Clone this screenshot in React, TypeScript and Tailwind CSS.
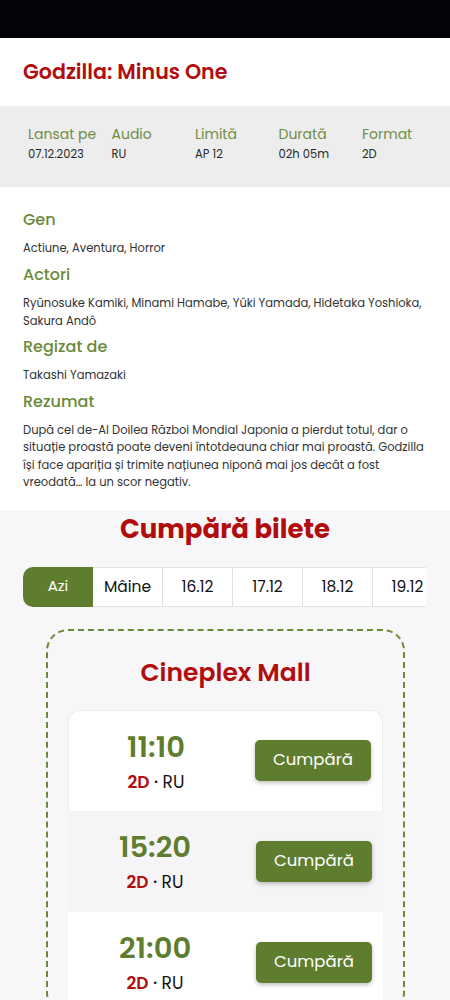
import React from "react";

const info = [
  { l: "Lansat pe", v: "07.12.2023" },
  { l: "Audio", v: "RU" },
  { l: "Limită", v: "AP 12" },
  { l: "Durată", v: "02h 05m" },
  { l: "Format", v: "2D" },
];

const tabs = ["Mâine", "16.12", "17.12", "18.12", "19.12"];

const shows = [
  { t: "11:10", bg: "bg-white", extra: "rounded-t-[12px] border-t border-x border-[#ececee]" },
  { t: "15:20", bg: "bg-[#f5f5f7]", extra: "" },
  { t: "21:00", bg: "bg-white", extra: "" },
];

export default function App() {
  return (
    <div className="w-[450px] min-h-[1000px] bg-[#f7f6f8] font-['Poppins','Inter',sans-serif] overflow-hidden">
      <div className="h-[38px] bg-[#050307]" />
      <div className="bg-white h-[68px] flex items-center px-[23px]">
        <h1 className="text-[#b20d0d] text-[20.6px] font-semibold">Godzilla: Minus One</h1>
      </div>
      <div className="bg-[#ededee] h-[81px] flex pl-[28px] pt-[18px]">
        {info.map((i) => (
          <div key={i.l} className="w-[83.5px] flex flex-col">
            <span className="text-[#6f8d45] text-[14px] leading-[20px] whitespace-nowrap">{i.l}</span>
            <span className="text-[#2a2a2a] text-[11.5px] leading-[16px] mt-[2px]">{i.v}</span>
          </div>
        ))}
      </div>
      <div className="bg-white px-[23px] pt-[21px] pb-[18px] text-[#333] text-[11.5px]">
        <h2 className="text-[#6a8a3a] text-[16px] font-medium leading-[24px]">Gen</h2>
        <p className="leading-[18px] mt-[7px]">Actiune, Aventura, Horror</p>
        <h2 className="text-[#6a8a3a] text-[16px] font-medium leading-[24px] mt-[6px]">Actori</h2>
        <p className="leading-[18px] mt-[7px]">Ryûnosuke Kamiki, Minami Hamabe, Yûki Yamada, Hidetaka Yoshioka, Sakura Andô</p>
        <h2 className="text-[#6a8a3a] text-[16px] font-medium leading-[24px] mt-[5px]">Regizat de</h2>
        <p className="leading-[18px] mt-[7px]">Takashi Yamazaki</p>
        <h2 className="text-[#6a8a3a] text-[16px] font-medium leading-[24px] mt-[6px]">Rezumat</h2>
        <p className="leading-[17.4px] mt-[8px]">
          După cel de-Al Doilea Război Mondial Japonia a pierdut totul, dar o situație proastă poate deveni întotdeauna chiar mai proastă. Godzilla își face apariția și trimite națiunea niponă mai jos decât a fost vreodată… la un scor negativ.
        </p>
      </div>
      <div className="flex flex-col items-center pt-[1px]">
        <h2 className="text-[#b20d0d] text-[26px] font-bold leading-[36px]">Cumpără bilete</h2>
      </div>
      <div className="mt-[20px] ml-[23px] w-[403px] overflow-hidden">
        <div className="flex h-[40px]">
          <div className="shrink-0 w-[70px] bg-[#5f7d2f] rounded-l-[10px] flex items-center justify-center text-white text-[15px]">Azi</div>
          {tabs.map((t) => (
            <div key={t} className="shrink-0 w-[70px] bg-white border border-l-0 border-[#e2e2e4] flex items-center justify-center text-[#111] text-[15.5px]">{t}</div>
          ))}
        </div>
      </div>
      <div className="mt-[22px] ml-[46px] w-[359px] border-2 border-dashed border-[#6a8a3a] rounded-[22px] px-[20px] pt-[25px]">
        <h3 className="text-center text-[#b20d0d] text-[25px] font-semibold leading-[34px]">Cineplex Mall</h3>
        <div className="mt-[20px] flex flex-col">
          {shows.map((s) => (
            <div key={s.t} className={`h-[101px] flex items-center justify-between pl-[11px] pr-[11px] ${s.bg} ${s.extra}`}>
              <div className="w-[152px] flex flex-col items-center">
                <span className="text-[#5f7d2f] text-[29px] font-semibold leading-[38px]">{s.t}</span>
                <span className="text-[17px] leading-[24px] mt-[4px]">
                  <span className="text-[#b20d0d] font-semibold">2D</span>
                  <span className="text-[#111] font-medium"> · </span>
                  <span className="text-[#111]">RU</span>
                </span>
              </div>
              <button className="w-[116px] h-[41px] bg-[#5f7d2f] rounded-[5px] text-white text-[16.5px] shadow-[0_2px_4px_rgba(0,0,0,0.25)]">Cumpără</button>
            </div>
          ))}
        </div>
      </div>
    </div>
  );
}
